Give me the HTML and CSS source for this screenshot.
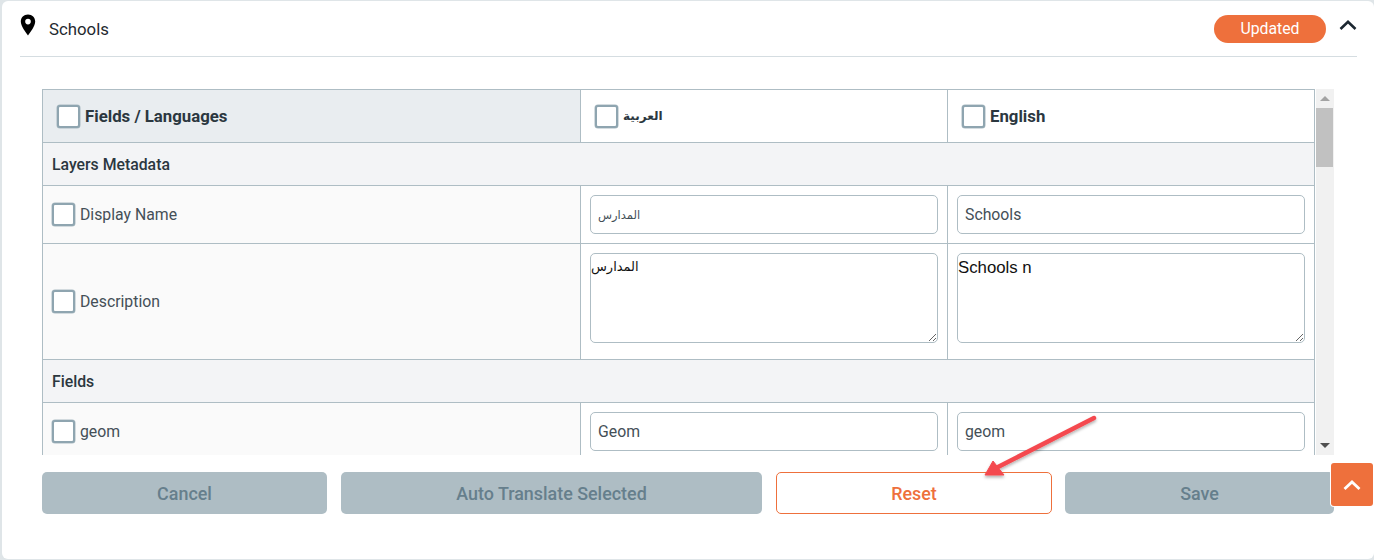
FILE: index.html
```html
<!DOCTYPE html>
<html lang="en">
<head>
<meta charset="utf-8">
<title>Schools</title>
<link rel="stylesheet" href="styles.css">
</head>
<body>
<section class="card">
  <header class="head">
    <svg class="pin" viewBox="0 0 16 22" width="16" height="22"><path fill-rule="evenodd" d="M8 0.5C3.8 0.5 0.8 3.6 0.8 7.6 0.8 12.4 6 18.6 8 21.5 10 18.6 15.2 12.4 15.2 7.6 15.2 3.6 12.2 0.5 8 0.5ZM8 4.8A2.8 2.8 0 1 1 8 10.4 2.8 2.8 0 1 1 8 4.8Z"/></svg>
    <span class="title">Schools</span>
    <span class="badge">Updated</span>
    <svg class="chev" viewBox="0 0 18 12" width="18" height="12"><path d="M1.5 10 9 2.8l7.5 7.2" fill="none" stroke="#1c2730" stroke-width="2.6"/></svg>
  </header>
  <div class="scroller">
    <table class="grid">
      <colgroup><col class="c1"><col class="c2"><col class="c3"></colgroup>
      <tr class="r-head">
        <th class="th-shade"><span class="lab lab-head"><span class="box"></span>Fields / Languages</span></th>
        <th><span class="lab lab-head"><span class="box"></span><span class="ar-head">العربية</span></span></th>
        <th><span class="lab lab-head"><span class="box"></span>English</span></th>
      </tr>
      <tr class="r-sec"><td colspan="3">Layers Metadata</td></tr>
      <tr class="r-input">
        <td class="name"><span class="lab"><span class="box"></span>Display Name</span></td>
        <td><input class="field ar" value="المدارس"></td>
        <td><input class="field" value="Schools"></td>
      </tr>
      <tr class="r-area">
        <td class="name"><span class="lab"><span class="box"></span>Description</span></td>
        <td class="cell-area"><textarea class="area ar">المدارس</textarea></td>
        <td class="cell-area"><textarea class="area">Schools n</textarea></td>
      </tr>
      <tr class="r-sec"><td colspan="3">Fields</td></tr>
      <tr class="r-input">
        <td class="name"><span class="lab"><span class="box"></span>geom</span></td>
        <td><input class="field" value="Geom"></td>
        <td><input class="field" value="geom"></td>
      </tr>
    </table>
    <div class="bar">
      <span class="tri tri-up"></span>
      <span class="thumb"></span>
      <span class="tri tri-down"></span>
    </div>
  </div>
  <footer class="actions">
    <button class="btn">Cancel</button>
    <button class="btn">Auto Translate Selected</button>
    <button class="btn btn-line">Reset</button>
    <button class="btn">Save</button>
  </footer>
  <button class="top" aria-label="Back to top"><svg viewBox="0 0 18 12" width="18" height="12"><path d="M1.5 10 9 3l7.5 7" fill="none" stroke="#fff" stroke-width="2.8"/></svg></button>
  <svg class="arrow" viewBox="0 0 130 80" width="130" height="80">
    <defs><filter id="sh" x="-20%" y="-20%" width="140%" height="150%"><feDropShadow dx="0" dy="2" stdDeviation="1.5" flood-color="#000" flood-opacity=".3"/></filter></defs>
    <g filter="url(#sh)" fill="#f44a4f">
      <path d="M122 14 26 63" stroke="#f44a4f" stroke-width="4.5" stroke-linecap="round"/>
      <path d="M13 71 21 57 32 71Z" stroke="#f44a4f" stroke-linejoin="round"/>
    </g>
  </svg>
</section>
</body>
</html>
```
FILE: styles.css
```css
* { box-sizing: border-box; }
html, body { margin: 0; height: 560px; overflow: hidden; }
body { background: #dfe5e8; padding: 1px 0 1px 2px; font-family: Roboto, "Liberation Sans", sans-serif; color: #2b373f; }
.card { position: relative; height: 558px; background: #fff; border-radius: 6px; padding: 0 17px 0 18px; }
.head { display: flex; align-items: center; height: 56px; border-bottom: 1px solid #d5dde1; }
.pin { margin-top: -8px; flex: none; }
.title { margin: 1px 0 0 13px; font-size: 16.8px; color: #1f2a30; }
.badge { margin-left: auto; width: 112px; height: 28px; line-height: 28px; border-radius: 14px; background: #ee703c; color: #fff; font-size: 15.8px; text-align: center; }
.chev { margin: -7px 0 0 13px; }
.scroller { display: flex; width: 1292px; height: 366px; margin: 32px 0 0 22px; overflow: hidden; }
.grid { border-collapse: collapse; table-layout: fixed; width: 1273px; height: max-content; flex: none; font-size: 15.8px; }
.c1 { width: 538px; } .c2 { width: 367px; } .c3 { width: 367px; }
.grid th, .grid td { border: 1px solid #aebdc4; padding: 0; }
.grid th { text-align: left; font-weight: 700; padding-left: 14px; background: #fff; }
.grid th.th-shade { background: #e9edf0; }
.r-head { height: 53px; }
.r-sec { height: 43px; }
.grid .r-sec td { background: #f3f4f6; padding: 1px 0 0 9px; font-weight: 500; font-size: 15.8px; }
.r-input { height: 58px; }
.r-area { height: 116px; }
.grid td { padding: 0 9px; }
.grid td.name { background: #fafafa; padding-left: 9px; }
.grid td.cell-area { vertical-align: top; padding-top: 9px; }
.lab { display: flex; align-items: center; gap: 5px; color: #444f57; font-size: 15.8px; }
.lab-head { color: #2b373f; font-size: 16.8px; }
.box { width: 23px; height: 23px; background: #fff; border: 2px solid #8fa5b0; border-radius: 3px; flex: none; box-shadow: 0 0 0 .5px #a9bac2; }
.ar-head { font-family: "DejaVu Sans", sans-serif; font-size: 12px; font-weight: 700; }
.field { display: block; width: 100%; height: 39px; border: 1px solid #aebdc4; border-radius: 5px; padding: 0 7px; font: 15.8px Roboto, sans-serif; color: #444f57; background: #fff; }
.field.ar { font-family: "DejaVu Sans", sans-serif; font-size: 11.5px; }
.area { display: block; width: 100%; height: 90px; margin: 0; border: 1px solid #aebdc4; border-radius: 5px; padding: 4px 0 0; font: 16.8px "Liberation Sans", sans-serif; color: #111; background: #fff; }
.area.ar { font-family: "DejaVu Sans", sans-serif; font-size: 13px; padding-top: 5px; }
.bar { position: relative; width: 18px; margin-left: 1px; flex: none; background: #f1f1f1; }
.thumb { position: absolute; left: 0; top: 19px; width: 17px; height: 59px; background: #c1c1c1; }
.tri { position: absolute; left: 4px; width: 0; height: 0; border-left: 5px solid transparent; border-right: 5px solid transparent; }
.tri-up { top: 7px; border-bottom: 5px solid #a3a3a3; }
.tri-down { bottom: 7px; border-top: 5px solid #505050; }
.actions { display: grid; grid-template-columns: 285px 421px 276px 269px; column-gap: 14px; width: 1292px; margin: 17px 0 0 22px; }
.actions .btn:last-child { margin: 0 1px 0 -1px; }
.btn { height: 42px; border: 0; border-radius: 5px; background: #aebdc4; color: #667f8c; font: 500 17.9px Roboto, sans-serif; padding: 0; }
.btn-line { background: #fff; border: 1px solid #ee703c; color: #ee703c; }
.top { position: absolute; left: 1329px; top: 462px; width: 42px; height: 43px; display: flex; align-items: center; justify-content: center; border: 0; border-radius: 3px; background: #ee703c; padding: 0; box-shadow: 0 0 0 1px #fff; }
.arrow { position: absolute; left: 970px; top: 403px; }
```
